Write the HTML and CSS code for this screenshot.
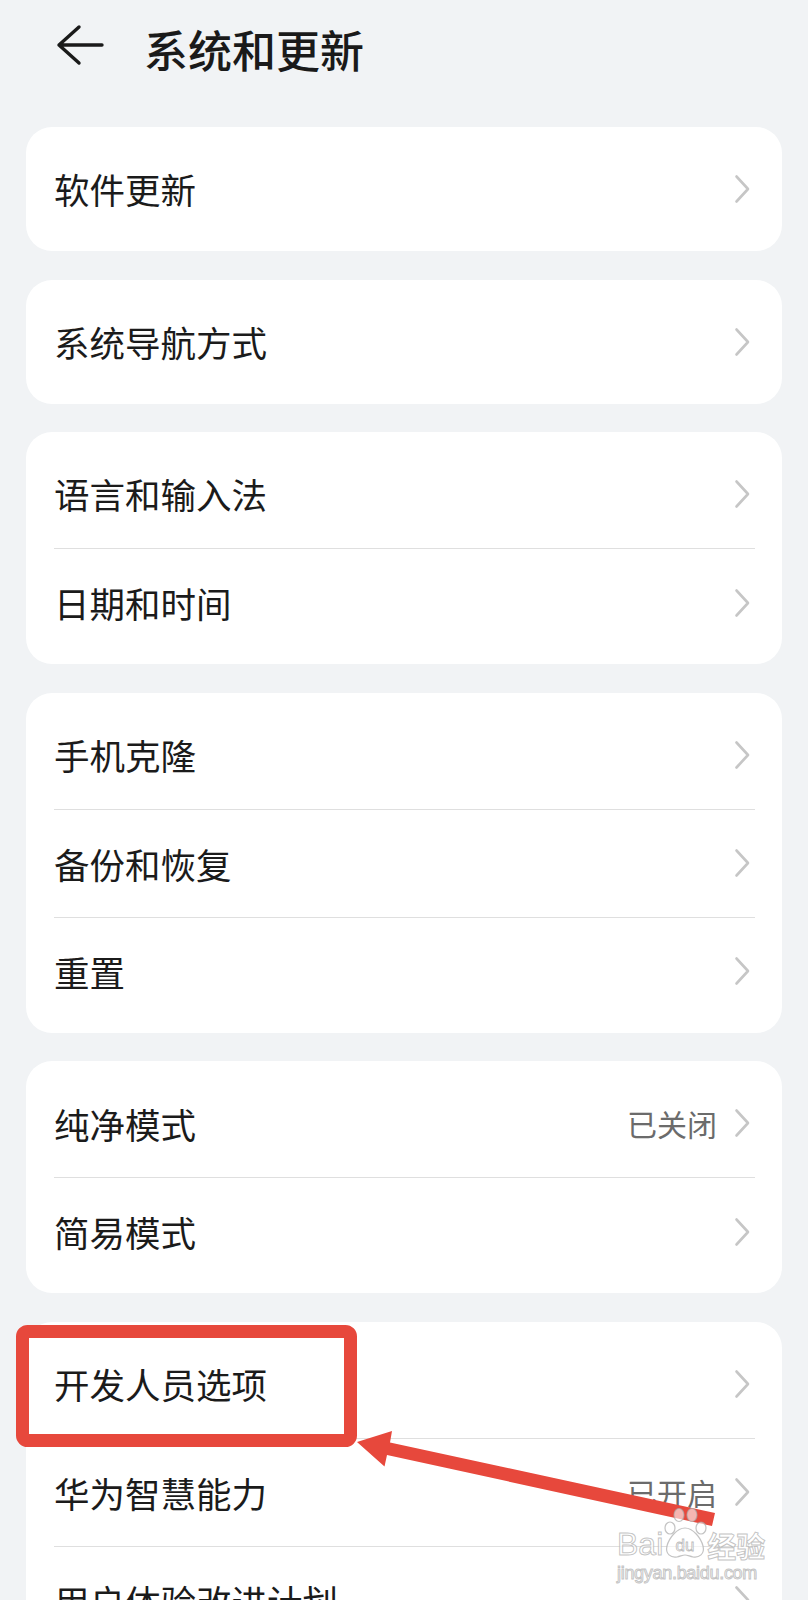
FILE: index.html
```html
<!DOCTYPE html>
<html lang="zh-CN">
  <head>
    <meta charset="UTF-8" />
    <meta name="viewport" content="width=device-width, initial-scale=1.0" />
    <title>系统和更新</title>
    <link rel="stylesheet" href="styles.css">
  </head>
  <body>
    <header class="topbar">
      <button class="back" aria-label="返回">
        <svg width="48" height="48" viewBox="0 0 48 48">
          <path d="M46 21H3M23 3L3 21L23 39" fill="none" stroke="#1a1a1a" stroke-width="3.4" stroke-linecap="round" stroke-linejoin="round" />
        </svg>
      </button>
      <h1 class="title">系统和更新</h1>
    </header>

    <main class="groups">
      <section class="card">
        <div class="row"><span class="label">软件更新</span><span class="chev"></span></div>
      </section>

      <section class="card">
        <div class="row"><span class="label">系统导航方式</span><span class="chev"></span></div>
      </section>

      <section class="card">
        <div class="row"><span class="label">语言和输入法</span><span class="chev"></span></div>
        <div class="row"><span class="label">日期和时间</span><span class="chev"></span></div>
      </section>

      <section class="card">
        <div class="row"><span class="label">手机克隆</span><span class="chev"></span></div>
        <div class="row"><span class="label">备份和恢复</span><span class="chev"></span></div>
        <div class="row"><span class="label">重置</span><span class="chev"></span></div>
      </section>

      <section class="card">
        <div class="row"><span class="label">纯净模式</span><span class="value">已关闭</span><span class="chev"></span></div>
        <div class="row"><span class="label">简易模式</span><span class="chev"></span></div>
      </section>

      <section class="card">
        <div class="row"><span class="label">开发人员选项</span><span class="chev"></span></div>
        <div class="row"><span class="label">华为智慧能力</span><span class="value">已开启</span><span class="chev"></span></div>
        <div class="row"><span class="label">用户体验改进计划</span><span class="chev"></span></div>
      </section>
    </main>

    <!-- 标注：红框和箭头 -->
    <svg class="markup" width="808" height="1600" viewBox="0 0 808 1600">
      <rect x="22.5" y="1331.5" width="328" height="109" rx="5" fill="none" stroke="#e7483c" stroke-width="13" />
      <polygon points="357,1442 392,1431 390,1442.4 715,1513 712,1526 387,1455 384.5,1466.5" fill="#e7483c" />
    </svg>

    <div class="watermark">
      <div class="wm-main">
        <span>Bai</span>
        <svg class="paw" width="48" height="54" viewBox="0 0 48 54">
          <ellipse cx="9" cy="22" rx="5" ry="6" />
          <ellipse cx="18" cy="9" rx="5" ry="6.5" />
          <ellipse cx="31" cy="9" rx="5" ry="6.5" />
          <ellipse cx="40" cy="22" rx="5" ry="6" />
          <path d="M24 22c-8 0-16 10-18 18c-2 8 4 12 10 11c4-1 6-2 8-2s4 1 8 2c6 1 12-3 10-11c-2-8-10-18-18-18z" />
          <text x="24" y="45" text-anchor="middle">du</text>
        </svg>
        <span>经验</span>
      </div>
      <div class="wm-url">jingyan.baidu.com</div>
    </div>
  </body>
</html>
```

FILE: styles.css
```css
body {
  margin: 0;
  width: 808px;
  height: 1600px;
  overflow: hidden;
  position: relative;
  background-color: #f1f3f5;
  font-family: "Noto Sans CJK SC", "Noto Sans", sans-serif;
  color: #1b1b1b;
}
.topbar {
  height: 98px;
  display: flex;
  align-items: center;
  padding-left: 56px;
}
.back {
  width: 48px;
  height: 48px;
  padding: 0;
  border: none;
  background: none;
  display: flex;
  margin-top: -2px;
}
.title {
  margin: 0 0 0 40px;
  font-size: 44px;
  font-weight: 500;
  line-height: 1;
  color: #1a1a1a;
}
.groups {
  display: flex;
  flex-direction: column;
  gap: 28.6px;
  padding: 29px 26px 0;
}
.card {
  background-color: #fff;
  border-radius: 26px;
  padding: 8px 0;
}
.row {
  box-sizing: border-box;
  height: 108px;
  margin: 0 27px 0 28px;
  display: flex;
  align-items: center;
  padding-right: 5px;
}
.row + .row {
  border-top: 1px solid #dfdfdf;
}
.label {
  flex: 1;
  font-size: 35.5px;
  line-height: 1;
}
.value {
  font-size: 30px;
  color: #6b6b6b;
  margin-right: 17px;
}
.chev {
  width: 16px;
  height: 30px;
  background: url("data:image/svg+xml;utf8,<svg xmlns='http://www.w3.org/2000/svg' width='16' height='30' viewBox='0 0 16 30'><polyline points='2.5,2.5 14,15 2.5,27.5' fill='none' stroke='%23c6c6c6' stroke-width='2.6' stroke-linecap='round' stroke-linejoin='round'/></svg>") no-repeat center;
}
.markup {
  position: absolute;
  left: 0;
  top: 0;
  pointer-events: none;
}
.watermark {
  position: absolute;
  left: 617px;
  top: 1510px;
  width: 150px;
  font-family: "Liberation Sans", sans-serif;
  color: rgba(255, 255, 255, 0.75);
  -webkit-text-stroke: 1px rgba(170, 170, 170, 0.7);
  pointer-events: none;
}
.wm-main {
  display: flex;
  align-items: flex-end;
  font-size: 32px;
  line-height: 1;
  height: 50px;
}
.wm-main span:last-child {
  font-family: "Noto Sans CJK SC", sans-serif;
  font-size: 29px;
  font-weight: bold;
}
.paw {
  margin: 0 -2px 0 -2px;
}
.paw ellipse,
.paw path {
  fill: rgba(255, 255, 255, 0.6);
  stroke: rgba(170, 170, 170, 0.7);
  stroke-width: 1.2;
}
.paw text {
  font-size: 17px;
  fill: rgba(255, 255, 255, 0.8);
  stroke: rgba(170, 170, 170, 0.8);
  stroke-width: 0.8;
}
.wm-url {
  margin-top: 4px;
  font-size: 18px;
  line-height: 1;
  letter-spacing: -0.3px;
}
```
